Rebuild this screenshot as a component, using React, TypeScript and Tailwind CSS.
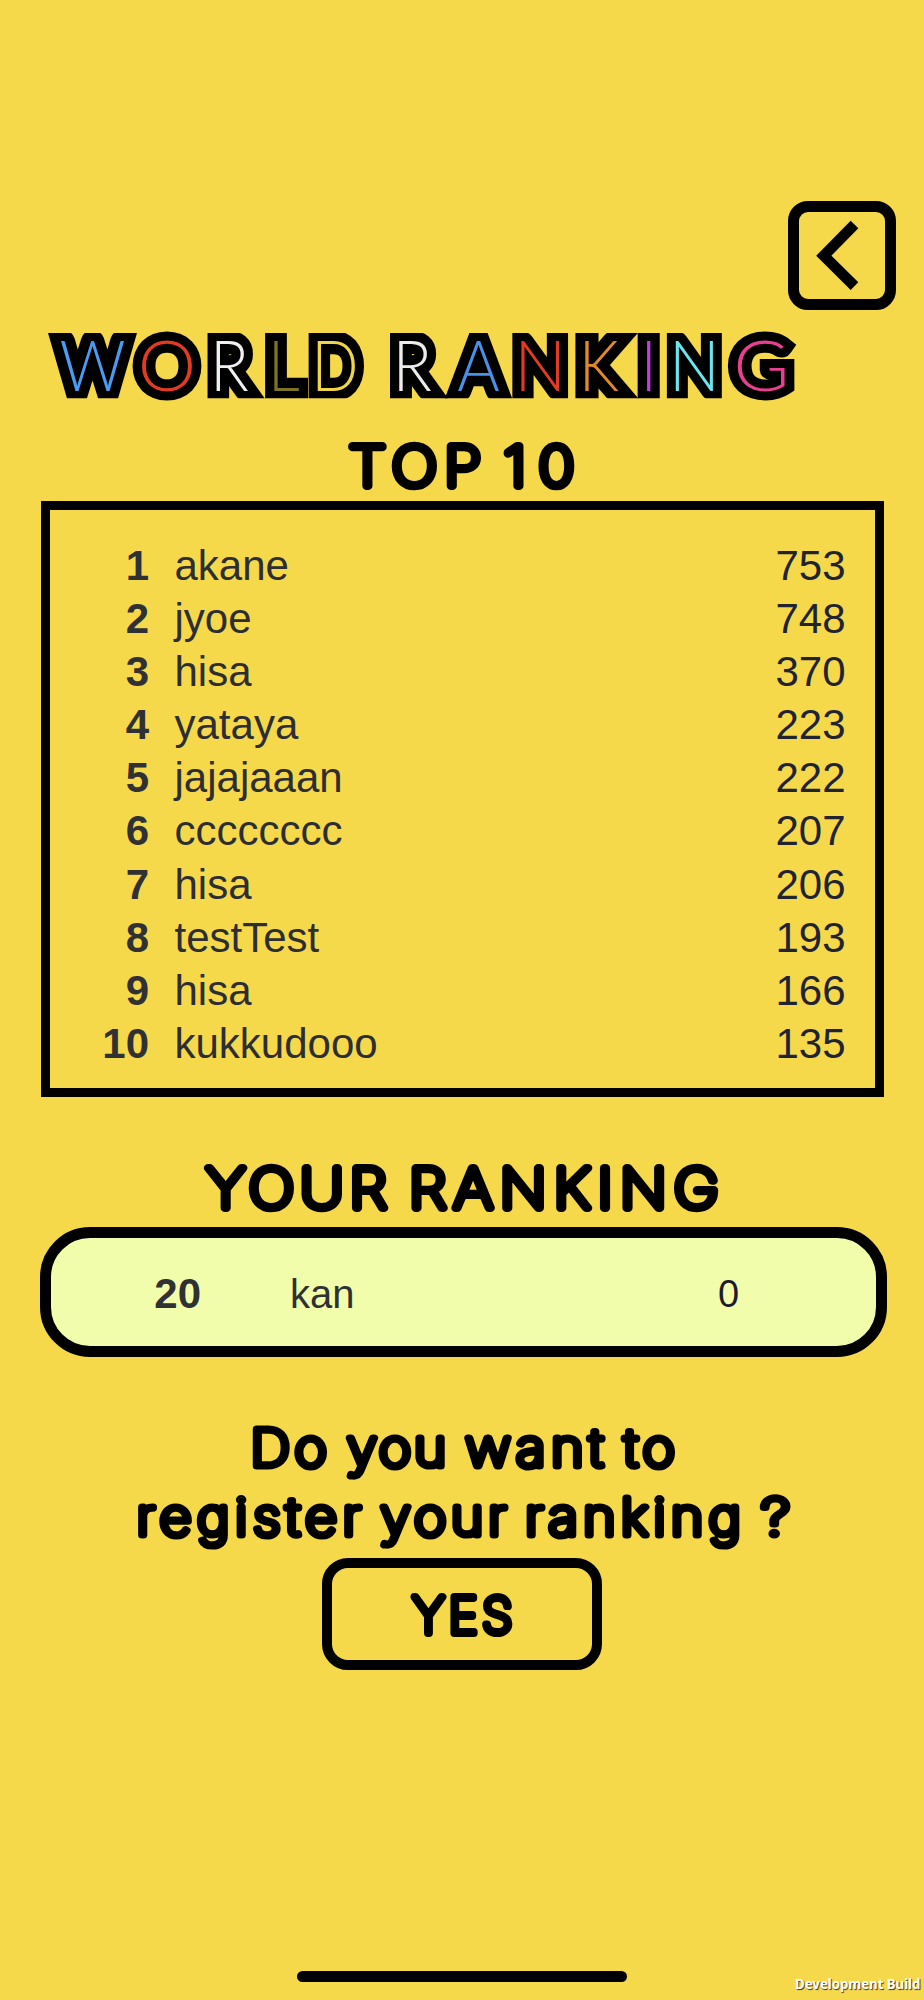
type Word = {
  text: string;
  /** Left and right ink edges of the word at a 100px font size. */
  ink: [number, number];
  /** Left and right edges of the drawn word, in px. */
  span: [number, number];
  y: number;
};

function RoundedText({
  id,
  words,
  size,
  stroke,
  height,
  label,
  stretch = 1.1,
}: {
  id: string;
  words: Word[];
  size: number;
  stroke: number;
  height: number;
  label: string;
  stretch?: number;
}) {
  return (
    <svg
      width={924}
      height={height}
      viewBox={`0 0 924 ${height}`}
      aria-label={label}
      className="block shrink-0 fill-black stroke-black font-[Inter,sans-serif] font-thin"
      strokeWidth={stroke}
      strokeLinejoin="round"
      strokeLinecap="round"
    >
      <g id={id}>
        {words.map(({ text, ink, span, y }) => {
          const left = span[0] + stroke / 2;
          const width = span[1] - span[0] - stroke;
          const natural = ((ink[1] - ink[0]) * size) / 100;
          const single = text.length === 1;
          const sx = single ? width / natural : stretch;
          const spacing = single ? 0 : (width / sx - natural) / (text.length - 1);
          return (
            <text
              key={text}
              transform={`translate(${left - (sx * ink[0] * size) / 100} ${y}) scale(${sx} 1)`}
              fontSize={size}
              style={{ letterSpacing: `${spacing}px` }}
            >
              {text}
            </text>
          );
        })}
      </g>
      <use href={`#${id}`} strokeWidth={3} />
    </svg>
  );
}

const LOGO: { g: string; ink: [number, number]; span: [number, number]; color: string; w: number; miter: number }[] = [
  { g: "W", ink: [1.5, 100], span: [60.5, 124.5], color: "#4a9bf2", w: 22, miter: 1.8 },
  { g: "O", ink: [5, 74], span: [141.5, 192.5], color: "#e23b22", w: 18, miter: 1.8 },
  { g: "R", ink: [10, 60], span: [216.5, 248.5], color: "#f0f0f0", w: 20, miter: 2.8 },
  { g: "L", ink: [10, 49.5], span: [274, 299], color: "#7d7423", w: 20.5, miter: 1.8 },
  { g: "D", ink: [10, 71], span: [317.5, 355.5], color: "#f0d648", w: 20.5, miter: 1.8 },
  { g: "R", ink: [10, 60], span: [399, 431.5], color: "#ececec", w: 20, miter: 2.8 },
  { g: "A", ink: [1, 65], span: [458, 499.5], color: "#4a90e6", w: 21, miter: 1.8 },
  { g: "N", ink: [10, 66], span: [521, 559.5], color: "#e23b22", w: 18.5, miter: 1.8 },
  { g: "K", ink: [10, 63], span: [585, 618.5], color: "#e08a2c", w: 22, miter: 2.8 },
  { g: "I", ink: [10, 16], span: [646.7, 651], color: "#c23fdc", w: 21, miter: 1.8 },
  { g: "N", ink: [10, 66], span: [675.5, 713.5], color: "#6be6ee", w: 18.5, miter: 1.8 },
  { g: "G", ink: [5, 67], span: [737, 784.5], color: "#e83f90", w: 18, miter: 1.8 },
];

function Logo() {
  return (
    <svg width={924} height={110} viewBox="0 0 924 110" aria-label="WORLD RANKING" className="block shrink-0 font-[Lato,sans-serif] font-light">
      <clipPath id="band">
        <rect x="0" y="23" width="924" height="65.3" />
      </clipPath>
      {LOGO.map(({ g, ink, span, color, w, miter }, i) => {
        const round = g === "O" || g === "G";
        const sx = g === "I" ? 0.9 : (span[1] - span[0]) / ((ink[1] - ink[0]) * 0.7);
        return (
          <g key={i} clipPath={round ? undefined : "url(#band)"}>
            <text
              transform={`translate(${span[0] - sx * ink[0] * 0.7} 81) scale(${sx} 1)`}
              fontSize={70}
              fill={color}
              stroke="#000"
              strokeWidth={w}
              strokeMiterlimit={miter}
              paintOrder="stroke"
            >
              {g}
            </text>
          </g>
        );
      })}
    </svg>
  );
}

const TOP10: [string, number][] = [
  ["akane", 753],
  ["jyoe", 748],
  ["hisa", 370],
  ["yataya", 223],
  ["jajajaaan", 222],
  ["cccccccc", 207],
  ["hisa", 206],
  ["testTest", 193],
  ["hisa", 166],
  ["kukkudooo", 135],
];

export default function App() {
  return (
    <main className="relative flex h-[2000px] w-[924px] flex-col overflow-hidden bg-[#f6d94b] pt-[201px] font-['Liberation_Sans',Arial,sans-serif]">
      <button aria-label="Back" className="mr-[28px] flex h-[109px] w-[108px] shrink-0 items-center justify-start self-end rounded-[20px] border-[11px] border-black">
        <svg width="86" height="87" viewBox="0 0 86 87" fill="none" stroke="#000" strokeWidth="10.8" className="block shrink-0">
          <polyline points="55.5,12.5 24.8,43.7 55.5,74.2" />
        </svg>
      </button>

      <Logo />

      <RoundedText
        id="top-heading"
        label="TOP 10"
        size={55}
        stroke={8}
        height={81}
        words={[
          { text: "TOP", ink: [6, 187.3], span: [348.3, 481], y: 66 },
          { text: "10", ink: [7, 88.7], span: [504, 574], y: 66 },
        ]}
      />

      <section className="mx-[41px] flex h-[596px] w-[843px] shrink-0 flex-col border-9 border-black pt-[29px] text-[42px] leading-[53.1px]">
        {TOP10.map(([name, score], i) => (
          <div key={i} className="flex pr-[29.5px]">
            <b className="w-[99px] text-right text-[#303133]">{i + 1}</b>
            <span className="ml-[25.5px] grow text-[#2d2e31]">{name}</span>
            <span className="text-[#212430]">{score}</span>
          </div>
        ))}
      </section>

      <div className="h-[43px] shrink-0" />
      <RoundedText
        id="your-heading"
        label="YOUR RANKING"
        size={55}
        stroke={8}
        height={87}
        words={[
          { text: "YOUR", ink: [3, 264.3], span: [204, 388], y: 67.7 },
          { text: "RANKING", ink: [11, 430.5], span: [411.7, 718], y: 67.7 },
        ]}
      />

      <section className="ml-[40px] flex h-[130px] w-[847px] shrink-0 items-center rounded-[50px] border-[11px] border-black bg-[#f2fdab] pt-[3px] leading-[48px]">
        <b className="w-[150px] text-right text-[42px] text-[#303133]">20</b>
        <span className="ml-[89px] w-[410px] text-[40px] text-[#303133]">kan</span>
        <span className="ml-[18px] text-[38px] text-[#1c1c2e]">0</span>
      </section>

      <div className="h-[43px] shrink-0" />
      <RoundedText
        id="question"
        label="Do you want to register your ranking ?"
        size={50}
        stroke={7.2}
        height={158}
        words={[
          { text: "Do", ink: [11, 123.4], span: [253, 327], y: 65.7 },
          { text: "you", ink: [4, 159.4], span: [345.5, 444.5], y: 65.7 },
          { text: "want", ink: [4, 214.8], span: [464.3, 605.7], y: 65.7 },
          { text: "to", ink: [0, 75.5], span: [620.7, 675], y: 65.7 },
          { text: "register", ink: [9, 327.9], span: [138, 363], y: 134.8 },
          { text: "your", ink: [4, 198.8], span: [379, 508.3], y: 134.8 },
          { text: "ranking", ink: [9, 321.2], span: [526.7, 739.3], y: 134.8 },
          { text: "?", ink: [4, 43], span: [760, 790.3], y: 134.8 },
        ]}
      />

      <button className="ml-[322px] flex h-[112px] w-[280px] shrink-0 items-center justify-center overflow-hidden rounded-[26px] border-[10px] border-black">
        <RoundedText
          id="yes"
          label="YES"
          size={49}
          stroke={7.8}
          height={92}
          stretch={1}
          words={[{ text: "YES", ink: [3, 176.5], span: [410.2, 512.7], y: 65 }]}
        />
      </button>

      <div className="mt-[301px] flex shrink-0 items-start">
        <div className="ml-[297px] h-[11px] w-[330px] shrink-0 rounded-full bg-black" />
        <span className="mt-[3px] mr-[4px] ml-auto origin-right scale-x-[0.88] text-[15px] leading-[18px] font-bold whitespace-nowrap text-white [font-family:'Noto_Sans',sans-serif] [text-shadow:1px_1px_1px_rgba(0,0,0,.75)]">
          Development Build
        </span>
      </div>
    </main>
  );
}
